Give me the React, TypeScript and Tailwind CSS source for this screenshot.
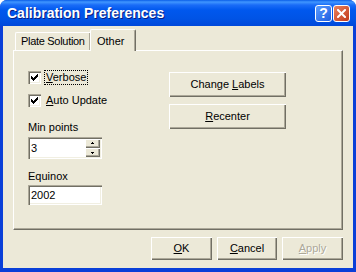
import React from 'react'

const raised =
  'shadow-[inset_1px_1px_0_#ffffff,inset_-1px_-1px_0_#716f64,inset_-2px_-2px_0_#aca899]'
const sunken =
  'shadow-[inset_1px_1px_0_#aca899,inset_2px_2px_0_#716f64,inset_-1px_-1px_0_#ffffff,inset_-2px_-2px_0_#f1efe2]'

function Check() {
  return (
    <div className={`w-[13px] h-[13px] bg-white flex items-center justify-center ${sunken}`}>
      <svg width="7" height="7" viewBox="0 0 7 7" shapeRendering="crispEdges">
        <path
          d="M0 2h1v3H0z M1 3h1v3H1z M2 4h1v3H2z M3 3h1v3H3z M4 2h1v3H4z M5 1h1v3H5z M6 0h1v3H6z"
          fill="#000"
        />
      </svg>
    </div>
  )
}

function Btn({
  children,
  className = '',
  disabled = false,
}: {
  children: React.ReactNode
  className?: string
  disabled?: boolean
}) {
  return (
    <div
      className={`flex items-center justify-center bg-[#ece9d8] ${raised} ${
        disabled ? 'text-[#aca899] [text-shadow:1px_1px_0_#ffffff]' : 'text-black'
      } ${className}`}
    >
      {children}
    </div>
  )
}

function SpinArrow({ up }: { up: boolean }) {
  return (
    <svg width="5" height="3" viewBox="0 0 5 3" shapeRendering="crispEdges">
      <path d={up ? 'M2 0h1v1H2z M1 1h3v1H1z' : 'M1 1h3v1H1z M2 2h1v1H2z'} fill="#000" />
    </svg>
  )
}

export default function App() {
  return (
    <div className="w-[356px] h-[272px] bg-white">
      <div className="w-[356px] h-[272px] flex flex-col rounded-t-[7px] bg-[#0a3fd8] font-['Liberation_Sans',Arial,sans-serif] text-[11px] text-black">
        {/* title bar */}
        <div className="h-[26px] flex items-center pl-[7px] pr-[6px] rounded-t-[7px] bg-[linear-gradient(to_bottom,#0a5ee8_0px,#4096ff_2px,#1a6cf7_5px,#0058ee_10px,#0054e6_18px,#0048da_26px)]">
          <div className="flex-1 text-white font-bold text-[14px] [text-shadow:1px_1px_0_#0a1d80]">
            Calibration Preferences
          </div>
          <div className="w-[17px] h-[17px] rounded-[3px] border border-white bg-[linear-gradient(135deg,#5a9cff,#1f5ee0)] flex items-center justify-center text-white font-bold text-[14px] leading-none">
            ?
          </div>
          <div className="w-[17px] h-[17px] ml-[1px] rounded-[3px] border border-white bg-[linear-gradient(135deg,#e8825e,#c2391a)] flex items-center justify-center">
            <svg width="9" height="9" viewBox="0 0 9 9">
              <path d="M1 1L8 8M8 1L1 8" stroke="#fff" strokeWidth="2" strokeLinecap="square" />
            </svg>
          </div>
        </div>

        {/* body */}
        <div className="flex-1 mx-[3px] mb-[4px] bg-[#ece9d8] flex flex-col">
          <div className="h-[24px] pt-[3px] pl-[12px] flex items-end">
            <div className="w-[75px] h-[18px] rounded-tl-[2px] border-t border-l border-white shadow-[inset_-1px_0_0_#aca899] flex items-center pl-[5px] tracking-[-0.3px]">
              Plate Solution
            </div>
            <div className="relative z-10 -mb-[1px] w-[46px] h-[22px] bg-[#ece9d8] rounded-t-[2px] border-t border-l border-white border-r border-r-[#716f64] shadow-[inset_-1px_0_0_#aca899] flex items-start pt-[3px] pl-[6px]">
              Other
            </div>
          </div>

          {/* panel */}
          <div className="ml-[10px] w-[330px] h-[180px] border-t border-l border-white border-r border-b border-r-[#716f64] border-b-[#716f64]">
            <div className="w-full h-full border-r border-b border-[#aca899] flex pl-[14px]">
              <div className="w-[141px] flex flex-col pt-[19px]">
                <div className="flex items-center h-[15px]">
                  <Check />
                  <span className="ml-[3px] px-[1px] h-[15px] leading-[13px] border border-dotted border-black">
                    <u>V</u>erbose
                  </span>
                </div>
                <div className="flex items-center h-[15px] mt-[8px]">
                  <Check />
                  <span className="ml-[3px] px-[1px] h-[15px] leading-[13px] border border-transparent">
                    <u>A</u>uto Update
                  </span>
                </div>
                <div className="mt-[13px] leading-[13px]">Min points</div>
                <div className={`mt-[3px] w-[74px] h-[22px] bg-white flex p-[2px] ${sunken}`}>
                  <div className="flex-1 pl-[1px] leading-[18px]">3</div>
                  <div className="w-[15px] flex flex-col">
                    <div className={`h-[9px] flex items-center justify-center bg-[#ece9d8] ${raised}`}>
                      <SpinArrow up />
                    </div>
                    <div className={`h-[9px] flex items-center justify-center bg-[#ece9d8] ${raised}`}>
                      <SpinArrow up={false} />
                    </div>
                  </div>
                </div>
                <div className="mt-[11px] leading-[13px]">Equinox</div>
                <div className={`mt-[2px] w-[74px] h-[20px] bg-white pl-[3px] leading-[20px] ${sunken}`}>
                  2002
                </div>
              </div>
              <div className="flex flex-col pt-[21px] gap-[7px]">
                <Btn className="w-[117px] h-[25px]">
                  Change <u className="ml-[3px]">L</u>abels
                </Btn>
                <Btn className="w-[117px] h-[25px]">
                  <u>R</u>ecenter
                </Btn>
              </div>
            </div>
          </div>

          {/* bottom buttons */}
          <div className="mt-[7px] flex justify-end gap-[5px] pr-[10px]">
            <Btn className="w-[61px] h-[23px]">
              <u>O</u>K
            </Btn>
            <Btn className="w-[60px] h-[23px]">
              <u>C</u>ancel
            </Btn>
            <Btn className="w-[61px] h-[23px]" disabled>
              <u>A</u>pply
            </Btn>
          </div>
        </div>
      </div>
    </div>
  )
}
